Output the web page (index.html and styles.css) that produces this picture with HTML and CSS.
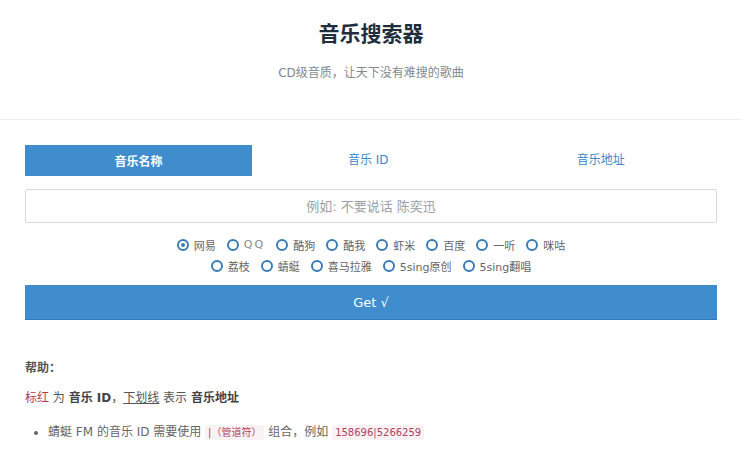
FILE: index.html
```html
<!DOCTYPE html>
<html lang="zh-CN">
<head>
    <meta charset="UTF-8">
    <meta name="viewport" content="width=device-width, initial-scale=1.0">
    <title>音乐搜索器</title>
    <link rel="stylesheet" href="styles.css">
</head>
<body>
    <div class="page">
        <header class="header">
            <h1>音乐搜索器</h1>
            <p>CD级音质，让天下没有难搜的歌曲</p>
        </header>

        <main class="main">
            <div class="tabs">
                <div class="tab active">音乐名称</div>
                <div class="tab">音乐 ID</div>
                <div class="tab">音乐地址</div>
            </div>

            <input class="search" type="text" placeholder="例如: 不要说话 陈奕迅">

            <div class="sources">
                <div class="source-row">
                    <label class="radio checked"><span class="dot"></span>网易</label>
                    <label class="radio"><span class="dot"></span><span class="qq">QQ</span></label>
                    <label class="radio"><span class="dot"></span>酷狗</label>
                    <label class="radio"><span class="dot"></span>酷我</label>
                    <label class="radio"><span class="dot"></span>虾米</label>
                    <label class="radio"><span class="dot"></span>百度</label>
                    <label class="radio"><span class="dot"></span>一听</label>
                    <label class="radio"><span class="dot"></span>咪咕</label>
                </div>
                <div class="source-row">
                    <label class="radio"><span class="dot"></span>荔枝</label>
                    <label class="radio"><span class="dot"></span>蜻蜓</label>
                    <label class="radio"><span class="dot"></span>喜马拉雅</label>
                    <label class="radio"><span class="dot"></span>5sing原创</label>
                    <label class="radio"><span class="dot"></span>5sing翻唱</label>
                </div>
            </div>

            <button class="get-btn">Get √</button>

            <section class="help">
                <h3>帮助：</h3>
                <p><span class="red">标红</span> 为 <b>音乐 ID</b>，<u>下划线</u> 表示 <b>音乐地址</b></p>
                <ul>
                    <li>蜻蜓 FM 的音乐 ID 需要使用 <code>|（管道符）</code> 组合，例如 <code>158696|5266259</code></li>
                </ul>
            </section>
        </main>
    </div>
</body>
</html>
```

FILE: styles.css
```css
/* --- Base --- */
body {
    margin: 0;
    background: #fff;
    color: #555;
    font-family: "DejaVu Sans", "Noto Sans CJK SC", sans-serif;
    font-size: 13px;
}

.page {
    width: 742px;
}

/* --- Header --- */
.header {
    text-align: center;
    height: 118px;
    border-bottom: 1px solid #eceff1;
    padding-top: 1px;
}

.header h1 {
    margin: 16px 0 0;
    font-size: 21px;
    line-height: 30px;
    color: #1f2d3d;
    font-family: "Noto Sans CJK SC", sans-serif;
    font-weight: 700;
}

.header p {
    margin: 17px 0 0;
    font-size: 12px;
    line-height: 18px;
    color: #7f8a90;
}

/* --- Main form --- */
.main {
    padding: 25px 25px 0;
}

.tabs {
    display: grid;
    grid-template-columns: 227px 1fr 1fr;
}

.tab {
    height: 31px;
    line-height: 31px;
    text-align: center;
    color: #3a87c8;
    font-size: 12px;
}

.tab.active {
    background: #3f8dcd;
    color: #fff;
    font-weight: 700;
    font-family: "Noto Sans CJK SC", sans-serif;
}

.search {
    display: block;
    box-sizing: border-box;
    width: 100%;
    height: 34px;
    margin-top: 13px;
    border: 1px solid #d7dadc;
    border-radius: 2px;
    text-align: center;
    font-family: "DejaVu Sans", "Noto Sans CJK SC", sans-serif;
    font-size: 13px;
}

.search::placeholder {
    color: #9aa0a4;
}

/* --- Sources --- */
.sources {
    margin-top: 11px;
}

.source-row {
    display: flex;
    justify-content: center;
    gap: 11px;
    height: 21px;
    align-items: center;
}

.radio {
    display: flex;
    align-items: center;
    gap: 5px;
    font-size: 11px;
    color: #666;
}

.dot {
    box-sizing: border-box;
    width: 12px;
    height: 12px;
    border: 2px solid #3c7cb4;
    border-radius: 50%;
    position: relative;
}

.radio.checked .dot::after {
    content: "";
    position: absolute;
    left: 2px;
    top: 2px;
    width: 4px;
    height: 4px;
    border-radius: 50%;
    background: #3c7cb4;
}

.qq {
    letter-spacing: 2px;
    color: #888;
}

.get-btn {
    display: block;
    width: 100%;
    height: 35px;
    margin-top: 9px;
    border: none;
    border-bottom: 1px solid #3478b4;
    background: #3f8dcd;
    color: #fff;
    font-family: "DejaVu Sans", sans-serif;
    font-size: 13px;
}

/* --- Help --- */
.help {
    margin-top: 38px;
}

.help h3 {
    margin: 0;
    font-size: 12px;
    line-height: 18px;
    color: #555;
    font-family: "Noto Sans CJK SC", sans-serif;
}

.help p {
    margin: 13px 0 0;
    font-size: 12px;
    line-height: 18px;
}

.help b {
    color: #444;
}

.red {
    color: #b03a52;
}

.help ul {
    margin: 16px 0 0;
    padding-left: 23px;
    font-size: 12px;
    line-height: 18px;
    color: #666;
}

code {
    font-family: "DejaVu Sans", "Noto Sans CJK SC", sans-serif;
    font-size: 10px;
    color: #b4405e;
    background: #f9f2f4;
    padding: 2px 3px;
    border-radius: 2px;
}
```
